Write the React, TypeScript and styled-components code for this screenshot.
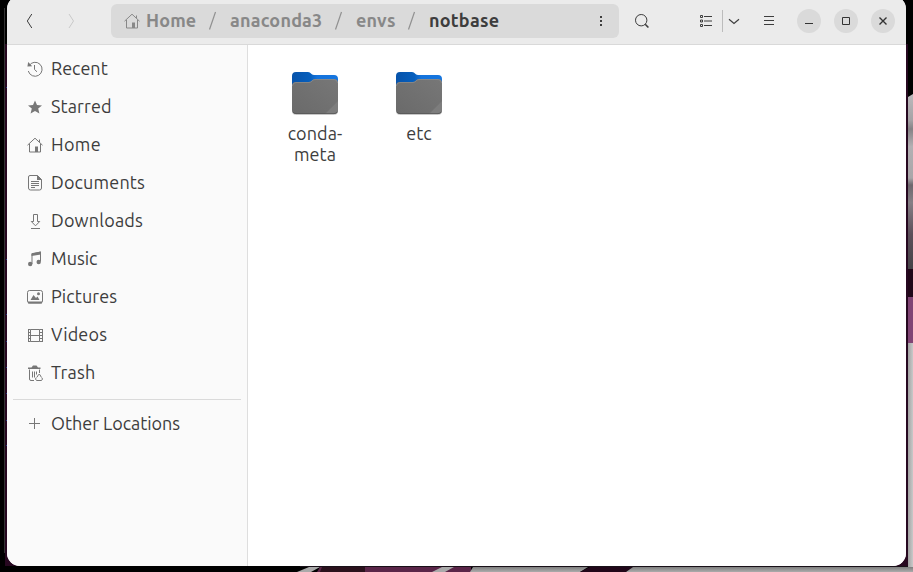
import React from "react";
import styled, { createGlobalStyle } from "styled-components";

const GlobalStyle = createGlobalStyle`
  * { box-sizing: border-box; }
  html, body { margin: 0; height: 572px; overflow: hidden; background: #000; }
  body { font-family: Ubuntu, "Noto Sans", sans-serif; color: #3d3d3d; }
  svg { display: block; flex: none; }
`;

const Desktop = styled.div`
  position: relative;
  width: 913px;
  height: 572px;
  overflow: hidden;
`;

const Wallpaper = styled.svg`
  position: absolute;
  inset: 0;
`;

const AppWindow = styled.main`
  position: relative;
  width: 899px;
  height: 570px;
  margin: -4px 0 0 7px;
  padding-top: 4px;
  border-radius: 13px;
  overflow: hidden;
  display: flex;
  flex-direction: column;
  background: #ebebeb;
`;

const HeaderBar = styled.header`
  height: 45px;
  flex: none;
  display: flex;
  align-items: center;
  padding: 0 11px 3px 15px;
  border-bottom: 1px solid #d9d9d9;
  background: #ebebeb;
`;

const IconButton = styled.button<{ $gap?: number; $faded?: boolean }>`
  border: 0;
  padding: 0;
  background: none;
  width: 16px;
  height: 16px;
  flex: none;
  margin-left: ${(p) => p.$gap ?? 0}px;
  color: ${(p) => (p.$faded ? "#c9c9c9" : "#3d3d3d")};
`;

const PathBar = styled.nav`
  width: 508px;
  height: 34px;
  margin-left: 32px;
  padding: 0 10px 0 13px;
  display: flex;
  align-items: center;
  border-radius: 6px;
  background: #dadada;
  color: #888;
`;

const Crumb = styled.span<{ $width: number; $tracking: number; $current?: boolean }>`
  width: ${(p) => p.$width}px;
  flex: none;
  padding-bottom: 2px;
  white-space: nowrap;
  font-size: 18px;
  line-height: 32px;
  font-weight: 700;
  letter-spacing: ${(p) => p.$tracking}px;
  color: ${(p) => (p.$current ? "#3d3d3d" : "#888")};
`;

const Divider = styled.span`
  width: 1px;
  height: 22px;
  margin-left: 8px;
  background: #bcbcbc;
`;

const WindowButton = styled.button<{ $gap?: number }>`
  width: 24px;
  height: 24px;
  flex: none;
  margin-left: ${(p) => p.$gap ?? 13}px;
  padding: 4px;
  border: 0;
  border-radius: 50%;
  background: #dadada;
  color: #333;
`;

const Content = styled.div`
  flex: 1;
  display: flex;
`;

const Sidebar = styled.aside`
  width: 241px;
  padding: 5px 6px;
  border-right: 1px solid #dedede;
  background: #fafafa;
`;

const Place = styled.div`
  height: 38px;
  padding-left: 14px;
  display: flex;
  align-items: center;
  gap: 8px;
  svg { color: #777; }
`;

const PlaceLabel = styled.span<{ $tracking: number }>`
  padding-bottom: 2px;
  font-size: 18px;
  line-height: 36px;
  white-space: nowrap;
  letter-spacing: ${(p) => p.$tracking}px;
`;

const Separator = styled.hr`
  height: 1px;
  margin: 7px 0 5px;
  border: 0;
  background: #dadada;
`;

const FileGrid = styled.section`
  flex: 1;
  display: flex;
  align-items: flex-start;
  padding: 22px 0 0 15px;
  background: #fff;
`;

const FileItem = styled.figure`
  width: 104px;
  margin: 0;
  display: flex;
  flex-direction: column;
  align-items: center;
  figcaption {
    margin-top: 8px;
    font-size: 18px;
    line-height: 21px;
    text-align: center;
    letter-spacing: 0.1px;
  }
`;

type IconName =
  | "back" | "forward" | "recent" | "star" | "home" | "document" | "download"
  | "music" | "picture" | "video" | "trash" | "plus" | "more" | "search"
  | "list" | "down" | "menu" | "minimize" | "maximize" | "close";

const shapes: Record<IconName, React.ReactNode> = {
  back: <path d="M9.8 1 5.3 8l4.5 7" />,
  forward: <path d="m6 1 4.5 7L6 15" />,
  recent: <><path d="M2 4.8A7 7 0 1 1 1.3 10M7.5 4v4.5l2.5 2.3" /><path d="M1.2 1 .4 5.4l4.8-.2z" fill="currentColor" stroke="none" /></>,
  star: <path d="m8 1.4 2 4.5 5 .5-3.8 3.2 1.2 4.8L8 12l-4.4 2.4 1.2-4.8L1 6.4l5-.5z" fill="currentColor" stroke="none" />,
  home: <><path d="m.5 8.2 7.5-7 7.5 7M2.5 7v8h11V7M12.5 5V2.5" /><path d="M8 9.5h3V15H8z" fill="currentColor" stroke="none" /></>,
  document: <><path d="M3 .5h7.5l4 4V13a2 2 0 0 1-2 2h-9a2 2 0 0 1-2-2V2A1.5 1.5 0 0 1 3 .5ZM4 6.5h8M4 8.5h8M4 10.5h8M4 12.5h4" /><path d="M10 0v5h5z" fill="currentColor" stroke="none" /></>,
  download: <path d="M6.5 1.5h4v7h2.2l-4.2 4.3-4.2-4.3h2.2zM4 15.5h9" />,
  music: <><path d="M5 13V3l8.5-2v9.5" /><path d="M4.5 2.2 14 .5v3L4.5 5z" fill="currentColor" stroke="none" /><circle cx="3.2" cy="13" r="2.2" fill="currentColor" stroke="none" /><circle cx="11.7" cy="11" r="2.2" fill="currentColor" stroke="none" /></>,
  picture: <><rect x=".5" y="1.5" width="15" height="12.5" rx="2" /><path d="M1 12.5h14v2H1zM3.5 11l3-5L9 9l1.5-1.5 2 3.5z" fill="currentColor" stroke="none" /><circle cx="11.5" cy="4.8" r="1.5" fill="currentColor" stroke="none" /></>,
  video: <><path d="M1.5 2v13M15.5 2v13M3.5 2.5v12M12.5 2.5v12M3.5 2.5h9M3.5 8.5h9M3.5 14.5h9" /><path d="M1.5 2.5h2M1.5 5.5h2M1.5 8.5h2M1.5 11.5h2M1.5 14.5h2M12.5 2.5H15M12.5 5.5H15M12.5 8.5H15M12.5 11.5H15M12.5 14.5H15" /></>,
  trash: <><path d="M2.5 4.5V14A1.5 1.5 0 0 0 4 15.5h3M5.5 6.5v6M7.5 6.5v6M9.5 6.5v3M12.5 4.5V8" /><path d="M1 2.5h3.5L6 .5h3.5l1.5 2h2.5V4H1z" fill="currentColor" stroke="none" /><path d="M10 12.2l1.6-2.7h1.2l1.5 2.7M9.3 12.5l-.8 1.5 1 1.5h5l1-1.5-.8-1.5" /></>,
  plus: <path d="M7.5 2v11M2 7.5h11" />,
  more: <path d="M7 3h2v2H7zM7 7h2v2H7zM7 11h2v2H7z" fill="currentColor" stroke="none" />,
  search: <><circle cx="7.2" cy="7.2" r="5.7" /><path d="m11.2 11.2 3.2 3.3" strokeWidth="1.6" /></>,
  list: <path d="M2.5 2.5h2v2h-2zM2.5 7h2v2h-2zM2.5 11.5h2v2h-2zM6 3.5h8M6 8h8M6 12.5h8" />,
  down: <path d="m3 6.2 5 4.2 5-4.2" strokeWidth="1.2" />,
  menu: <path d="M3 3.5h10M3 7.5h10M3 11.5h10" />,
  minimize: <path d="M4 10.5h8" />,
  maximize: <path d="M4.5 4.5h7v7h-7z" />,
  close: <path d="m4.5 4.5 7 7m0-7-7 7" strokeWidth="1.4" />,
};

const Icon = ({ name }: { name: IconName }) => (
  <svg width="16" height="16" viewBox="0 0 16 16" fill="none" stroke="currentColor">
    {shapes[name]}
  </svg>
);

const SlashSvg = styled.svg`
  margin-right: 12px;
`;
const Slash = () => (
  <SlashSvg width="10" height="22" viewBox="0 0 10 22" fill="none" stroke="#909090" strokeWidth="1.2">
    <path d="M7.5 2 1.5 19.5" />
  </SlashSvg>
);

const CrumbIcon = styled.span`
  margin-right: 6px;
`;

const Folder = () => (
  <svg width="48" height="48" viewBox="0 0 48 48">
    <defs>
      <linearGradient id="tab" x1="0" y1="0" x2="1" y2="0">
        <stop offset="0" stopColor="#0753aa" />
        <stop offset=".4" stopColor="#075fbd" />
        <stop offset=".55" stopColor="#1473dc" />
        <stop offset="1" stopColor="#1676df" />
      </linearGradient>
      <linearGradient id="front" x1="0" y1="1" x2="1" y2="0">
        <stop offset="0" stopColor="#6a6a6a" />
        <stop offset="1" stopColor="#777" />
      </linearGradient>
    </defs>
    <rect x="1" y="10" width="46" height="38" rx="4" fill="#000" opacity=".18" />
    <path d="M1 9a4 4 0 0 1 4-4h12c3 0 3 3 6 3h20a4 4 0 0 1 4 4v17H1z" fill="url(#tab)" />
    <path d="M1 19a4 4 0 0 1 4-4h13c3 0 3-3 6-3h19a4 4 0 0 1 4 4v27a4 4 0 0 1-4 4H5a4 4 0 0 1-4-4z" fill="url(#front)" />
    <path d="M1.5 19A3.5 3.5 0 0 1 5 15.5h13c3 0 3-3 6-3h19a3.5 3.5 0 0 1 3.5 3.5" fill="none" stroke="#8c8c8c" strokeWidth=".8" />
    <path d="M47 34v9a4 4 0 0 1-4 4h-9z" fill="#7d7d7d" />
    <path d="M2 45a4 4 0 0 0 3 1.6h38a4 4 0 0 0 3-1.6" fill="none" stroke="#555" strokeWidth=".8" />
  </svg>
);

const places: { label: string; icon: IconName; tracking: number }[] = [
  { label: "Recent", icon: "recent", tracking: 0 },
  { label: "Starred", icon: "star", tracking: 0.12 },
  { label: "Home", icon: "home", tracking: 0.35 },
  { label: "Documents", icon: "document", tracking: 0.17 },
  { label: "Downloads", icon: "download", tracking: 0.2 },
  { label: "Music", icon: "music", tracking: 0 },
  { label: "Pictures", icon: "picture", tracking: 0.1 },
  { label: "Videos", icon: "video", tracking: 0.15 },
  { label: "Trash", icon: "trash", tracking: 0.2 },
];

const Backdrop = () => (
  <Wallpaper width="913" height="572" viewBox="0 0 913 572">
    <defs>
      <linearGradient id="rock" x1="0" y1="0" x2="0" y2="1">
        <stop offset="0" stopColor="#bcb9bc" />
        <stop offset=".15" stopColor="#a5a2a5" />
        <stop offset=".2" stopColor="#858285" />
        <stop offset=".3" stopColor="#b3b0b3" />
        <stop offset=".48" stopColor="#a9a6a9" />
        <stop offset=".52" stopColor="#6d676d" />
        <stop offset=".62" stopColor="#857f85" />
        <stop offset=".8" stopColor="#5c4f5a" />
        <stop offset="1" stopColor="#454347" />
      </linearGradient>
      <linearGradient id="pale" x1="0" y1="0" x2="1" y2="0">
        <stop offset="0" stopColor="#a2a2a2" />
        <stop offset="1" stopColor="#c9c9c9" />
      </linearGradient>
      <linearGradient id="shade" x1="0" y1="0" x2="0" y2="1">
        <stop offset="0" stopColor="#7d7d7d" />
        <stop offset="1" stopColor="#acacac" />
      </linearGradient>
    </defs>
    <path d="M0 0h913v572H0z" fill="#000" />
    <path d="M4 8h1v545H4z" fill="#333" />
    <path d="M5 44h12v522H5z" fill="#270820" />
    <path d="M6 87h1v1H6zM6 259h1v1H6zM6 314h1v1H6zM6 341h1v1H6zM6 367h1v1H6zM6 393h1v1H6zM6 420h1v1H6zM6 445h1v1H6z" fill="#223c83" />
    <path d="M908 97l5-3v175h-5z" fill="url(#rock)" />
    <path d="M908 269h5v28h-5z" fill="#210719" />
    <path d="M908 297h5v46h-5z" fill="#804474" />
    <path d="M908 343h5v229h-5z" fill="url(#pale)" />
    <path d="M297 572l12-5h11l-9 5z" fill="#aaa" />
    <path d="M320 567h151v5H317z" fill="#5a2548" />
    <path d="M322 567h43v5h-45z" fill="#2a111c" />
    <path d="M432 572l10-5h12l-9 5z" fill="#aaa" />
    <path d="M470 572l3-5h115l-8 5z" fill="url(#shade)" />
    <path d="M580 572l10-5h43l-7 5z" fill="#210719" />
    <path d="M626 572l7-5h280v5z" fill="url(#shade)" />
    <path d="M894 44h14v523h-14z" fill="#270820" />
    <path d="M300 566h608v1H300z" fill="#181018" />
  </Wallpaper>
);

export default function App() {
  return (
    <Desktop>
      <GlobalStyle />
      <Backdrop />
      <AppWindow>
        <HeaderBar>
          <IconButton aria-label="Back"><Icon name="back" /></IconButton>
          <IconButton aria-label="Forward" $gap={25} $faded><Icon name="forward" /></IconButton>
          <PathBar>
            <CrumbIcon><Icon name="home" /></CrumbIcon>
            <Crumb $width={62} $tracking={0.15}>Home</Crumb>
            <Slash />
            <Crumb $width={104} $tracking={0.2}>anaconda3</Crumb>
            <Slash />
            <Crumb $width={51} $tracking={0.2}>envs</Crumb>
            <Slash />
            <Crumb $width={164} $tracking={0.25} $current>notbase</Crumb>
            <IconButton aria-label="More"><Icon name="more" /></IconButton>
          </PathBar>
          <IconButton aria-label="Search" $gap={15}><Icon name="search" /></IconButton>
          <IconButton aria-label="List view" $gap={48}><Icon name="list" /></IconButton>
          <Divider />
          <IconButton aria-label="View options" $gap={3}><Icon name="down" /></IconButton>
          <IconButton aria-label="Menu" $gap={19}><Icon name="menu" /></IconButton>
          <WindowButton aria-label="Minimize" $gap={20}><Icon name="minimize" /></WindowButton>
          <WindowButton aria-label="Maximize"><Icon name="maximize" /></WindowButton>
          <WindowButton aria-label="Close"><Icon name="close" /></WindowButton>
        </HeaderBar>
        <Content>
          <Sidebar>
            {places.map((p) => (
              <Place key={p.label}>
                <Icon name={p.icon} />
                <PlaceLabel $tracking={p.tracking}>{p.label}</PlaceLabel>
              </Place>
            ))}
            <Separator />
            <Place>
              <Icon name="plus" />
              <PlaceLabel $tracking={-0.03}>Other Locations</PlaceLabel>
            </Place>
          </Sidebar>
          <FileGrid>
            <FileItem><Folder /><figcaption>conda-<br />meta</figcaption></FileItem>
            <FileItem><Folder /><figcaption>etc</figcaption></FileItem>
          </FileGrid>
        </Content>
      </AppWindow>
    </Desktop>
  );
}
